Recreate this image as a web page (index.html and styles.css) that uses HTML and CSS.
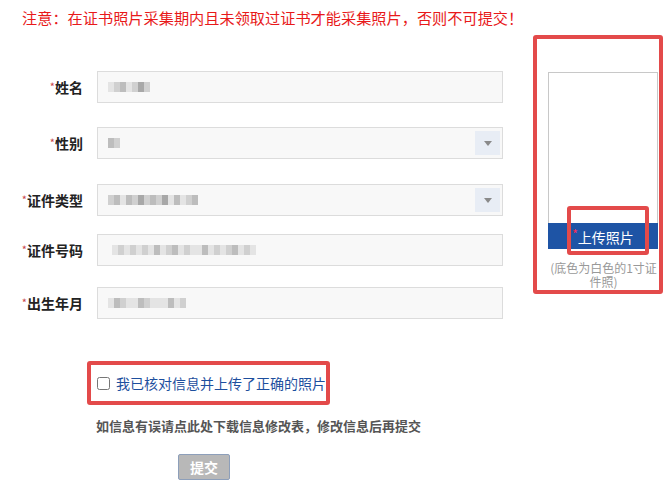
FILE: index.html
```html
<!DOCTYPE html>
<html lang="zh-CN">

<head>
  <meta charset="UTF-8">
  <meta name="viewport" content="width=device-width, initial-scale=1.0">
  <title>照片采集</title>
  <link rel="stylesheet" href="styles.css">
</head>

<body>
  <p class="notice">注意：在证书照片采集期内且未领取过证书才能采集照片，否则不可提交！</p>

  <div class="main">
    <div class="form">
      <div class="row">
        <label class="label"><em>*</em>姓名</label>
        <div class="field">
          <span class="mosaic"><i class="c1"></i><i class="c2"></i><i class="c3"></i><i class="c1"></i><i class="c2"></i><i class="c4"></i><i class="c2"></i></span>
        </div>
      </div>
      <div class="row">
        <label class="label"><em>*</em>性别</label>
        <div class="field select">
          <span class="mosaic"><i class="c3"></i><i class="c2"></i></span>
          <span class="arrow"></span>
        </div>
      </div>
      <div class="row">
        <label class="label"><em>*</em>证件类型</label>
        <div class="field select">
          <span class="mosaic"><i class="c2"></i><i class="c3"></i><i class="c1"></i><i class="c3"></i><i class="c2"></i><i class="c4"></i><i class="c2"></i><i class="c3"></i><i class="c2"></i><i class="c4"></i><i class="c1"></i><i class="c3"></i><i class="c1"></i><i class="c2"></i><i class="c3"></i></span>
          <span class="arrow"></span>
        </div>
      </div>
      <div class="row">
        <label class="label"><em>*</em>证件号码</label>
        <div class="field">
          <span class="mosaic id"><i class="c1"></i><i class="c2"></i><i class="c1"></i><i class="c2"></i><i class="c1"></i><i class="c2"></i><i class="c1"></i><i class="c3"></i><i class="c1"></i><i class="c2"></i><i class="c3"></i><i class="c1"></i><i class="c2"></i><i class="c1"></i><i class="c1"></i><i class="c3"></i><i class="c1"></i><i class="c2"></i><i class="c1"></i><i class="c2"></i><i class="c3"></i><i class="c1"></i><i class="c2"></i><i class="c1"></i></span>
        </div>
      </div>
      <div class="row">
        <label class="label"><em>*</em>出生年月</label>
        <div class="field">
          <span class="mosaic"><i class="c1"></i><i class="c3"></i><i class="c2"></i><i class="c1"></i><i class="c1"></i><i class="c3"></i><i class="c2"></i><i class="c1"></i><i class="c1"></i><i class="c1"></i><i class="c3"></i><i class="c1"></i><i class="c2"></i></span>
        </div>
      </div>

      <div class="confirm">
        <input type="checkbox" id="agree">
        <label for="agree">我已核对信息并上传了正确的照片</label>
      </div>

      <p class="tip">如信息有误请点此处下载信息修改表，修改信息后再提交</p>

      <button class="submit" disabled>提交</button>
    </div>

    <div class="photo-panel">
      <div class="photo">
        <div class="photo-img"></div>
        <div class="upload">
          <span class="upload-mark"><em>*</em>上传照片</span>
        </div>
      </div>
      <p class="caption">(底色为白色的1寸证件照)</p>
    </div>
  </div>
</body>

</html>
```

FILE: styles.css
```css
*,
*::before,
*::after {
  box-sizing: border-box;
}

body {
  margin: 0;
  font-family: "Noto Sans CJK SC", "Microsoft YaHei", sans-serif;
  color: #333;
  background: #fff;
}

.notice {
  margin: 0;
  padding: 7px 0 0 22px;
  font-size: 15.2px;
  line-height: 20px;
  color: #e8191a;
}

.main {
  display: flex;
  align-items: flex-start;
  margin-top: 8px;
}

.form {
  width: 503px;
  padding-top: 36px;
}

.row {
  display: flex;
  align-items: center;
  height: 32px;
}

.row:nth-child(2) {
  margin-top: 24px;
}

.row:nth-child(3) {
  margin-top: 25px;
}

.row:nth-child(4) {
  margin-top: 18px;
}

.row:nth-child(5) {
  margin-top: 21px;
}

.label {
  width: 83px;
  margin-right: 14px;
  text-align: right;
  font-size: 14px;
  font-weight: bold;
  color: #222;
}

.label em {
  font-style: normal;
  font-weight: normal;
  font-size: 11px;
  color: #c8454a;
  vertical-align: 2px;
}

.field {
  width: 406px;
  height: 32px;
  display: flex;
  align-items: center;
  justify-content: space-between;
  padding-left: 10px;
  border: 1px solid #dcdcdc;
  background: #f8f8f8;
}

.mosaic {
  display: flex;
}

.mosaic i {
  display: block;
  width: 6px;
  height: 10px;
}

.mosaic.id {
  margin-left: 4px;
}

.mosaic .c1 {
  background: #e4e4e4;
}

.mosaic .c2 {
  background: #d0d0d0;
}

.mosaic .c3 {
  background: #bdbdbd;
}

.mosaic .c4 {
  background: #a8a8a8;
}

.arrow {
  width: 25px;
  height: 24px;
  margin-right: 2px;
  display: flex;
  align-items: center;
  justify-content: center;
  background: #e8edf5;
}

.arrow::after {
  content: "";
  border-left: 4px solid transparent;
  border-right: 4px solid transparent;
  border-top: 5px solid #8a8a8a;
}

.confirm {
  display: flex;
  align-items: center;
  width: 243px;
  height: 44px;
  margin: 42px 0 0 87px;
  padding-left: 6px;
  border: 4px solid #e34a4a;
  border-radius: 3px;
}

.confirm input {
  width: 13px;
  height: 13px;
  margin: 0 6px 0 0;
}

.confirm label {
  font-size: 14px;
  color: #1d4f9e;
}

.tip {
  margin: 11px 0 0 96px;
  font-size: 13px;
  line-height: 20px;
  font-weight: bold;
  color: #555;
}

.submit {
  display: block;
  width: 52px;
  height: 26px;
  margin: 18px 0 0 178px;
  padding: 0;
  border: 1px solid #8d9fba;
  border-radius: 2px;
  background: #b8b8b8;
  color: #fff;
  font-family: inherit;
  font-size: 14px;
  font-weight: bold;
}

.photo-panel {
  width: 130px;
  margin-left: 30px;
  padding: 33px 0 1px 11px;
  border: 4px solid #e34a4a;
  border-radius: 3px;
}

.photo {
  width: 110px;
}

.photo-img {
  height: 151px;
  border: 1px solid #c8c8c8;
  border-bottom: none;
}

.upload {
  position: relative;
  height: 26px;
  display: flex;
  align-items: center;
  justify-content: center;
  background: #1e54a5;
  color: #fff;
  font-size: 14px;
}

.upload-mark em {
  font-style: normal;
  font-size: 12px;
  color: #ff2a55;
  vertical-align: 4px;
}

/* annotation frame drawn over the upload button */
.upload::after {
  content: "";
  position: absolute;
  left: 19px;
  top: -17px;
  width: 82px;
  height: 49px;
  border: 4px solid #e34a4a;
  border-radius: 3px;
}

.caption {
  margin: 12px 0 0;
  font-size: 12px;
  line-height: 14px;
  text-align: center;
  color: #999;
}
```
